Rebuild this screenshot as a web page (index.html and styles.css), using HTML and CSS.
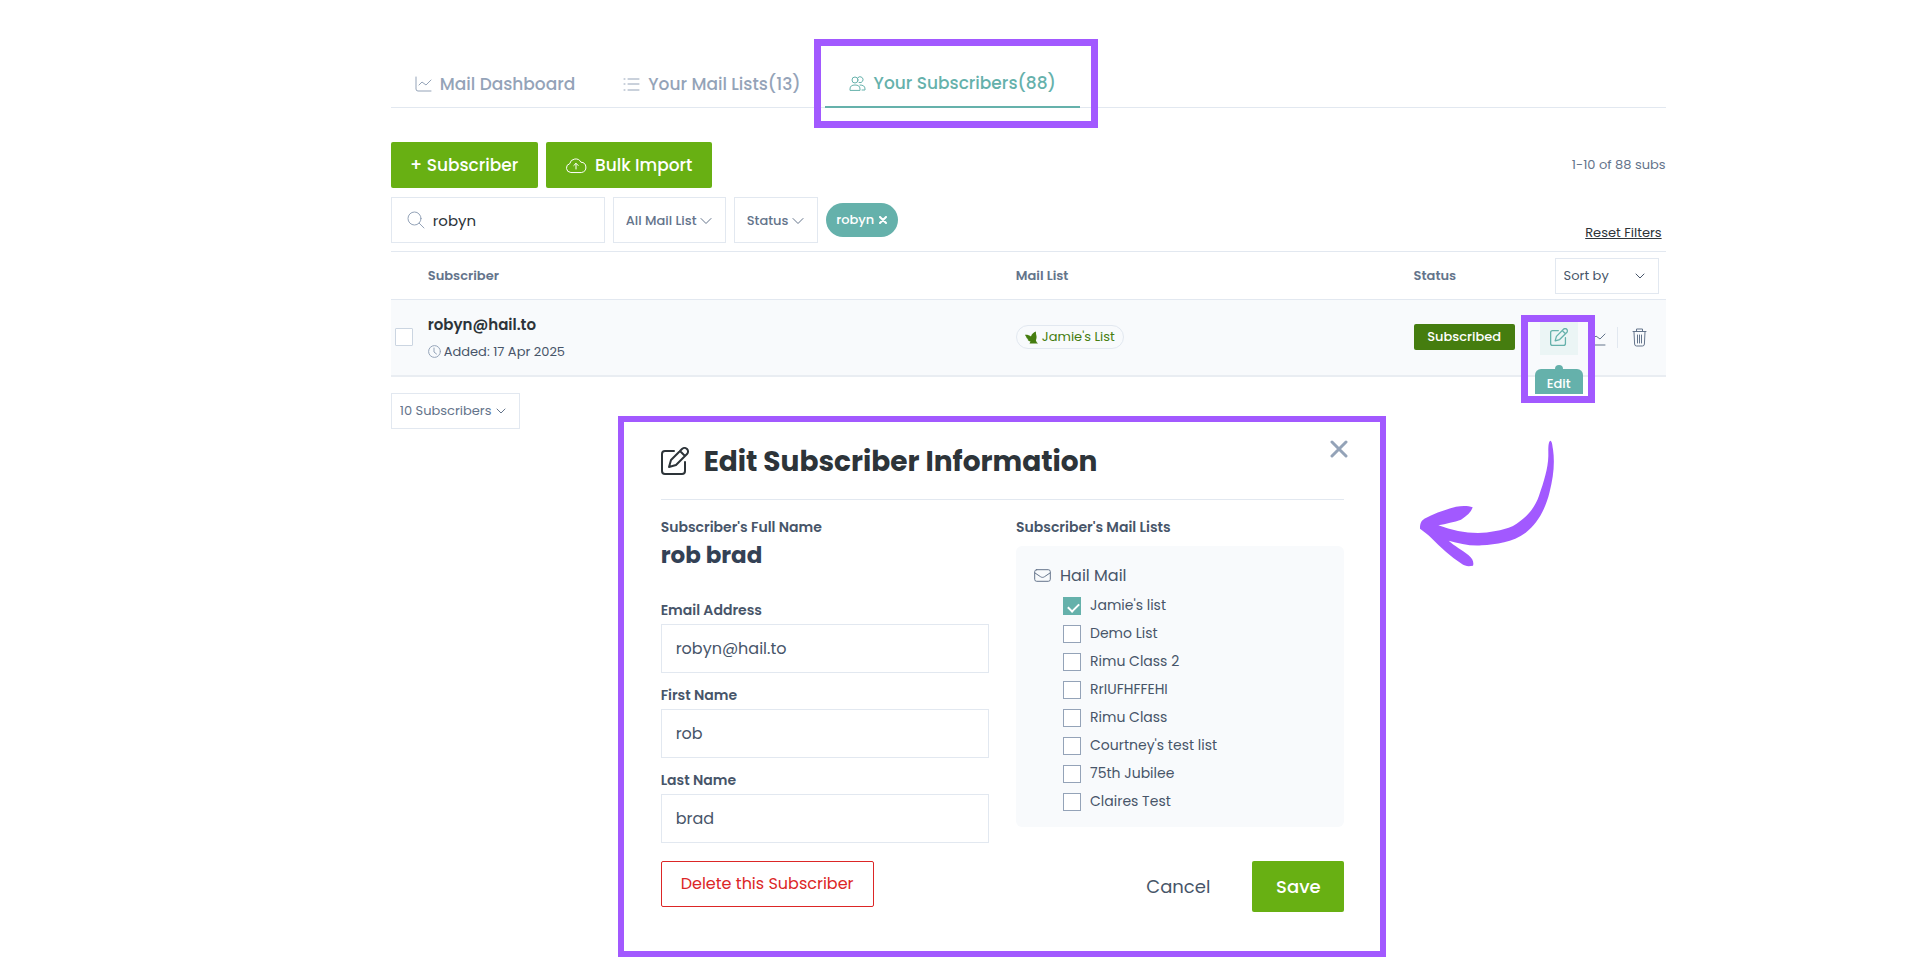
FILE: index.html
```html
<!DOCTYPE html>
<html lang="en">
<head>
  <meta charset="utf-8">
  <title>Your Subscribers</title>
  <link rel="stylesheet" href="styles.css">
</head>
<body>
<div class="page">
  <nav class="tabs">
    <a class="tab" href="#dashboard">
      <svg class="icon" width="17" height="17" viewBox="0 0 17 17"><path d="M1 1v12a2 2 0 0 0 2 2h13M4 9l3-3 4 3 5-5"/></svg>
      Mail Dashboard
    </a>
    <a class="tab" href="#lists">
      <svg class="icon" width="17" height="17" viewBox="0 0 17 17"><path d="M5 3h11M5 8h11M5 14h11M1 3h1M1 8h1M1 14h1"/></svg>
      Your Mail Lists(13)
    </a>
    <a class="tab active" href="#subscribers">
      <svg class="icon" width="17" height="17" viewBox="0 0 17 17"><circle cx="6" cy="5" r="3"/><path d="M9 2.500a3 3 0 1 1 1 5M1 15v-1c0-3 2-4 5-4s5 1 5 4v1zM11 10c3 0 5 1 5 4v1h-3"/></svg>
      Your Subscribers(88)
    </a>
  </nav>

  <div class="toolbar">
    <button class="green-button">+ Subscriber</button>
    <button class="green-button import-button">
      <svg class="icon" width="22" height="17" viewBox="0 0 22 17"><path d="M5.500 15.500a4.500 4.500 0 0 1-.8-8.800 6 6 0 0 1 11.200-1.500 5.200 5.200 0 0 1 .8 10.300zM11 12V6.500M8.800 8.500 11 6.300l2.200 2.200"/></svg>
      Bulk Import
    </button>
    <span class="count">1-10 of 88 subs</span>
  </div>

  <div class="filters">
    <label class="search">
      <svg class="icon" width="18" height="18" viewBox="0 0 18 18"><circle cx="7.500" cy="7.500" r="6.500"/><path d="m12.200 12.200 4.800 4.800"/></svg>
      <input type="text" value="robyn" aria-label="Search subscribers">
    </label>
    <div class="select filter-list">
      <select aria-label="Mail list"><option>All Mail List</option></select>
      <svg class="chevron" width="12" height="12" viewBox="0 0 12 12"><path d="m1 3.500 5 5 5-5"/></svg>
    </div>
    <div class="select filter-status">
      <select aria-label="Status"><option>Status</option></select>
      <svg class="chevron" width="12" height="12" viewBox="0 0 12 12"><path d="m1 3.500 5 5 5-5"/></svg>
    </div>
    <button class="chip">robyn
      <svg class="icon" width="8" height="8" viewBox="0 0 8 8"><path d="m1 1 6 6M7 1 1 7"/></svg>
    </button>
    <a class="reset" href="#reset">Reset Filters</a>
  </div>

  <table class="subscribers">
    <thead>
      <tr>
        <th class="col-check"></th>
        <th class="col-name">Subscriber</th>
        <th class="col-list">Mail List</th>
        <th class="col-status">Status</th>
        <th class="col-actions">
          <div class="select sort">
            <select aria-label="Sort by"><option>Sort by</option></select>
            <svg class="chevron" width="10" height="10" viewBox="0 0 10 10"><path d="m1 3 4 4 4-4"/></svg>
          </div>
        </th>
      </tr>
    </thead>
    <tbody>
      <tr>
        <td><input class="row-check" type="checkbox" aria-label="Select robyn@hail.to"></td>
        <td>
          <div class="email">robyn@hail.to</div>
          <div class="added">
            <svg class="icon" width="13" height="13" viewBox="0 0 13 13"><circle cx="6.500" cy="6.500" r="5.900"/><path d="M6 3v4l2.500 2"/></svg>
            Added: 17 Apr 2025
          </div>
        </td>
        <td>
          <span class="list-pill">
            <svg width="13" height="13" viewBox="0 0 13 13"><path fill="currentColor" d="M0 3.700C2 3.500 4.500 4 6 5.500 6.500 3 8.500 1.500 11 .5c-.3 1.500.2 3 .5 4.500.3 1.700-.3 3.300-.6 4.500.4 1.200 1.100 2.200 2.100 3H4.500l1-2C4 10.300 3 9.500 2.500 8.500h1C2 7.500 1.300 6.700 1.200 5.700.6 5.200.2 4.500 0 3.700z"/></svg>
            Jamie's List
          </span>
        </td>
        <td><span class="badge">Subscribed</span></td>
        <td>
          <div class="actions">
            <button class="edit-button" aria-label="Edit subscriber">
              <svg class="icon" width="18" height="18" viewBox="0 0 28 28"><path d="M13 4H4a3 3 0 0 0-3 3v17a3 3 0 0 0 3 3h17a3 3 0 0 0 3-3v-9M8 20l2-7L21 2a3 3 0 0 1 5 5L15 18zM19 4l5 5"/></svg>
              <span class="tooltip">Edit</span>
            </button>
            <button class="stats-button" aria-label="Subscriber stats">
              <svg class="icon" width="17" height="17" viewBox="0 0 17 17"><path d="M1 1v13a2 2 0 0 0 2 2h13M4 10l3-3 4 3 5-5"/></svg>
            </button>
            <button class="trash-button" aria-label="Delete subscriber">
              <svg class="icon" width="15" height="19" viewBox="0 0 15 19"><path d="M1 3.500h13M4.500 3V1h6v2M2 4l.6 12a2 2 0 0 0 2 2h5.800a2 2 0 0 0 2-2L13 4M5.500 7v8M7.500 7v8M9.500 7v8"/></svg>
            </button>
          </div>
        </td>
      </tr>
    </tbody>
  </table>

  <div class="select page-size">
    <select aria-label="Subscribers per page"><option>10 Subscribers</option></select>
    <svg class="chevron" width="10" height="10" viewBox="0 0 10 10"><path d="m1 3 4 4 4-4"/></svg>
  </div>

  <svg class="arrow" width="180" height="160" viewBox="0 0 540 480"><path d="M448 62C453 64 454 74 456 88C462 130 457 172 446 215C433 270 408 312 374 338C335 368 285 372 242 376C208 379 174 370 143 362C158 376 188 393 202 405C216 416 219 428 216 437C202 440 191 438 184 433C148 409 119 382 91 354C81 343 69 336 57 326C57 311 60 303 70 296C101 280 135 268 165 260C184 257 202 257 215 262C211 276 199 287 180 299C160 306 135 311 112 316C151 331 191 339 231 339C266 338 302 332 336 318C375 295 400 267 414 227C429 184 441 145 442 108C442 88 441 65 448 62Z"/></svg>

  <form class="modal">
    <button type="button" class="close" aria-label="Close">
      <svg class="icon" width="18" height="18" viewBox="0 0 18 18"><path d="m2 2 14 14M16 2 2 16"/></svg>
    </button>
    <h1 class="modal-title">
      <svg class="icon" width="28" height="28" viewBox="0 0 28 28"><path d="M13 4H4a3 3 0 0 0-3 3v17a3 3 0 0 0 3 3h17a3 3 0 0 0 3-3v-9M8 20l2-7L21 2a3 3 0 0 1 5 5L15 18zM19 4l5 5"/></svg>
      Edit Subscriber Information
    </h1>
    <div class="modal-columns">
      <div>
        <div class="field-label">Subscriber's Full Name</div>
        <div class="full-name">rob brad</div>
        <label class="field-label" for="email">Email Address</label>
        <input class="field" type="text" id="email" value="robyn@hail.to">
        <label class="field-label" for="first">First Name</label>
        <input class="field" type="text" id="first" value="rob">
        <label class="field-label" for="last">Last Name</label>
        <input class="field" type="text" id="last" value="brad">
      </div>
      <div>
        <div class="field-label">Subscriber's Mail Lists</div>
        <div class="mail-lists">
          <div class="mail-group">
            <svg class="icon" width="17" height="13" viewBox="0 0 17 13"><rect x=".7" y=".7" width="15.600" height="11.600" rx="2"/><path d="m1 4 5.500 3.700c1.300.9 2.700.9 4 0L16 4"/></svg>
            Hail Mail
          </div>
          <label><input type="checkbox" checked> Jamie's list</label>
          <label><input type="checkbox"> Demo List</label>
          <label><input type="checkbox"> Rimu Class 2</label>
          <label><input type="checkbox"> RrIUFHFFEHI</label>
          <label><input type="checkbox"> Rimu Class</label>
          <label><input type="checkbox"> Courtney's test list</label>
          <label><input type="checkbox"> 75th Jubilee</label>
          <label><input type="checkbox"> Claires Test</label>
        </div>
      </div>
    </div>
    <div class="modal-footer">
      <button type="button" class="delete-button">Delete this Subscriber</button>
      <button type="button" class="cancel-button">Cancel</button>
      <button type="button" class="save-button">Save</button>
    </div>
  </form>
</div>
</body>
</html>
```

FILE: styles.css
```css
* {
  box-sizing: border-box;
}

body {
  margin: 0;
  min-height: 100vh;
  padding: 60px 13.25% 0 20.35%;
  background: #fff;
  color: #475569;
  font-family: Poppins, Inter, sans-serif;
  font-size: 13px;
}

button, input, select {
  font: inherit;
  color: inherit;
}

button {
  border: none;
  background: none;
  padding: 0;
  cursor: pointer;
}

.icon, .chevron {
  fill: none;
  stroke: currentColor;
  stroke-linecap: round;
  stroke-linejoin: round;
  flex: none;
}

.page {
  position: relative;
}

/* Tabs */
.tabs {
  display: flex;
  height: 48px;
  border-bottom: 1px solid #e2e8f0;
}

.tab {
  position: relative;
  display: flex;
  align-items: center;
  gap: 8px;
  height: 48px;
  padding: 0 24px;
  color: #94a3b8;
  font-size: 17px;
  font-weight: 500;
  text-decoration: none;
  white-space: nowrap;
}

.tab.active {
  color: #65b1ab;
  border-bottom: 2px solid #65b1ab;
}

.tab.active::after {
  content: "";
  position: absolute;
  top: -21px;
  right: -18px;
  bottom: -22px;
  left: -11px;
  border: 7px solid #a259ff;
}

/* Buttons and filters */
.toolbar {
  display: flex;
  align-items: center;
  gap: 8px;
  margin-top: 34px;
}

.green-button {
  display: flex;
  align-items: center;
  justify-content: center;
  gap: 8px;
  width: 147px;
  height: 46px;
  border-radius: 2px;
  background: #68b013;
  color: #fff;
  font-size: 17px;
  font-weight: 500;
}

.import-button {
  width: 166px;
}

.count {
  margin-left: auto;
  color: #64748b;
}

.filters {
  display: flex;
  align-items: center;
  gap: 8px;
  margin-top: 9px;
}

.search {
  display: flex;
  align-items: center;
  gap: 8px;
  width: 214px;
  height: 46px;
  padding: 0 15px;
  border: 1px solid #e2e8f0;
  color: #94a3b8;
}

.search input {
  width: 100%;
  border: none;
  padding: 0;
  outline: none;
  color: #2d3439;
  font-size: 15px;
}

.select {
  position: relative;
  color: #64748b;
}

.select select {
  width: 100%;
  height: 100%;
  padding: 0 8px;
  border: 1px solid #e2e8f0;
  border-radius: 0;
  background: #fff;
  appearance: none;
}

.chevron {
  position: absolute;
  top: calc(50% - 5px);
  right: 14px;
  pointer-events: none;
}

.filter-list {
  width: 113px;
  height: 46px;
  font-weight: 500;
}

.filter-status {
  width: 84px;
  height: 46px;
  font-weight: 500;
}

.filters .select select {
  padding: 0 12px;
}

.chip {
  display: flex;
  align-items: center;
  justify-content: center;
  gap: 5px;
  width: 72px;
  height: 34px;
  border-radius: 17px;
  background: #65b1ab;
  color: #fff;
  font-weight: 500;
}

.chip .icon {
  stroke-width: 2;
}

.reset {
  align-self: flex-end;
  margin: 0 4px 0 auto;
  color: #2d3439;
}

/* Subscriber table */
.subscribers {
  width: 100%;
  margin-top: 8px;
  border-collapse: collapse;
  table-layout: fixed;
  border-top: 1px solid #e2e8f0;
}

.subscribers th {
  height: 48px;
  padding: 0;
  border-bottom: 1px solid #e2e8f0;
  color: #64748b;
  font-weight: 600;
  text-align: left;
}

.subscribers td {
  height: 76px;
  padding: 0;
  border-bottom: 2px solid #e9edf2;
  background: #f8fafc;
}

.col-check {
  width: 37px;
}

.col-list {
  width: 31.2%;
}

.col-status, .col-actions {
  width: 126px;
}

.sort {
  width: 104px;
  height: 36px;
  margin: 0 7px 0 auto;
  color: #475569;
  font-weight: 400;
}

input[type="checkbox"] {
  appearance: none;
  flex: none;
  width: 18px;
  height: 18px;
  margin: 0;
  border: 1px solid #94a3b8;
  background: #fff;
}

input[type="checkbox"]:checked {
  border-color: #65b1ab;
  background: #65b1ab;
}

/* tick */
input[type="checkbox"]:checked::after {
  content: "";
  display: block;
  width: 9px;
  height: 5px;
  margin: 4px 0 0 4px;
  border-bottom: 2px solid #fff;
  border-left: 2px solid #fff;
  transform: rotate(-45deg);
}

.mail-lists input[type="checkbox"]:checked::after {
  margin-top: 5px;
}

input.row-check {
  display: block;
  margin-left: 4px;
  border-color: #cbd5e1;
  border-radius: 1px;
}

.email {
  padding-top: 1px;
  color: #2d3439;
  font-size: 15px;
  font-weight: 600;
  line-height: 24px;
}

.added {
  display: flex;
  align-items: center;
  gap: 3px;
  margin-top: 4px;
  line-height: 22px;
}

.added .icon {
  color: #94a3b8;
}

.list-pill {
  display: inline-flex;
  align-items: center;
  justify-content: center;
  gap: 4px;
  height: 24px;
  padding: 0 8px;
  border: 1px solid #e2e8f0;
  border-radius: 12px;
  color: #457d0f;
}

.badge {
  display: flex;
  align-items: center;
  justify-content: center;
  width: 101px;
  height: 26px;
  border-radius: 2px;
  background: #457d0f;
  color: #fff;
  font-weight: 500;
}

.actions {
  display: flex;
  align-items: center;
  color: #64748b;
}

.actions button {
  display: flex;
  align-items: center;
  justify-content: center;
}

.actions .edit-button {
  position: relative;
  z-index: 1;
  width: 38px;
  height: 35px;
  background: #ebf5f5;
  color: #65b1ab;
}

.edit-button::after {
  content: "";
  position: absolute;
  top: -5px;
  right: -17px;
  bottom: -48px;
  left: -19px;
  border: 7px solid #a259ff;
}

.edit-button .icon {
  stroke-width: 2;
}

.tooltip {
  position: absolute;
  top: 49px;
  left: -5px;
  width: 48px;
  height: 25px;
  border-radius: 6px 6px 0 0;
  background: #65b1ab;
  color: #fff;
  font-weight: 500;
  line-height: 29px;
}

.tooltip::before {
  content: "";
  position: absolute;
  top: -4px;
  left: 20px;
  width: 8px;
  height: 8px;
  border-radius: 4px;
  background: #65b1ab;
}

.stats-button {
  width: 40px;
  height: 21px;
  border-right: 1px solid #e2e8f0;
}

.trash-button {
  width: 44px;
}

.page-size {
  width: 129px;
  height: 36px;
  margin-top: 16px;
}

/* Arrow from the edit button to the form */
.arrow {
  position: absolute;
  top: 360px;
  right: 85px;
  fill: #a259ff;
}

/* Edit form */
.modal {
  position: relative;
  width: 60.3%;
  margin: -13px 0 0 17.8%;
  padding: 21px 36px 39px 37px;
  border: 6px solid #a259ff;
  background: #fff;
}

.close {
  position: absolute;
  top: 18px;
  right: 32px;
  width: 18px;
  height: 18px;
  color: #94a3b8;
}

.close .icon {
  stroke-width: 3;
}

.modal-title {
  display: flex;
  align-items: center;
  gap: 15px;
  margin: 0;
  padding-bottom: 19px;
  border-bottom: 1px solid #e2e8f0;
  color: #2d3439;
  font-size: 28px;
  font-weight: 700;
  line-height: 37px;
}

.modal-title .icon {
  stroke-width: 2;
}

.modal-columns {
  display: grid;
  grid-template-columns: 1fr 1fr;
  gap: 27px;
  align-items: start;
  padding-top: 17px;
}

.field-label {
  display: block;
  font-size: 14px;
  font-weight: 600;
  line-height: 20px;
}

.full-name {
  margin: 2px 0 29px;
  color: #334155;
  font-size: 23px;
  font-weight: 700;
  line-height: 32px;
}

.field {
  display: block;
  width: 100%;
  height: 49px;
  margin: 4px 0 12px;
  padding: 0 14px;
  border: 1px solid #e2e8f0;
  font-size: 16px;
}

.mail-lists {
  margin-top: 9px;
  padding: 16px 18px 11px;
  border-radius: 6px;
  background: #f8fafc;
}

.mail-group {
  display: flex;
  align-items: center;
  gap: 9px;
  margin-bottom: 2px;
  font-size: 16px;
  line-height: 28px;
}

.mail-group .icon {
  color: #64748b;
}

.mail-lists label {
  display: flex;
  align-items: center;
  gap: 9px;
  height: 28px;
  padding-left: 29px;
  font-size: 14px;
}

.modal-footer {
  display: flex;
  align-items: flex-start;
  margin-top: 6px;
}

.delete-button {
  width: 213px;
  height: 46px;
  border: 1px solid #dc2626;
  border-radius: 2px;
  color: #dc2626;
  font-size: 16px;
}

.cancel-button {
  height: 51px;
  margin: 0 42px 0 auto;
  font-size: 18px;
}

.save-button {
  width: 92px;
  height: 51px;
  border-radius: 2px;
  background: #68b013;
  color: #fff;
  font-size: 18px;
  font-weight: 500;
}
```
